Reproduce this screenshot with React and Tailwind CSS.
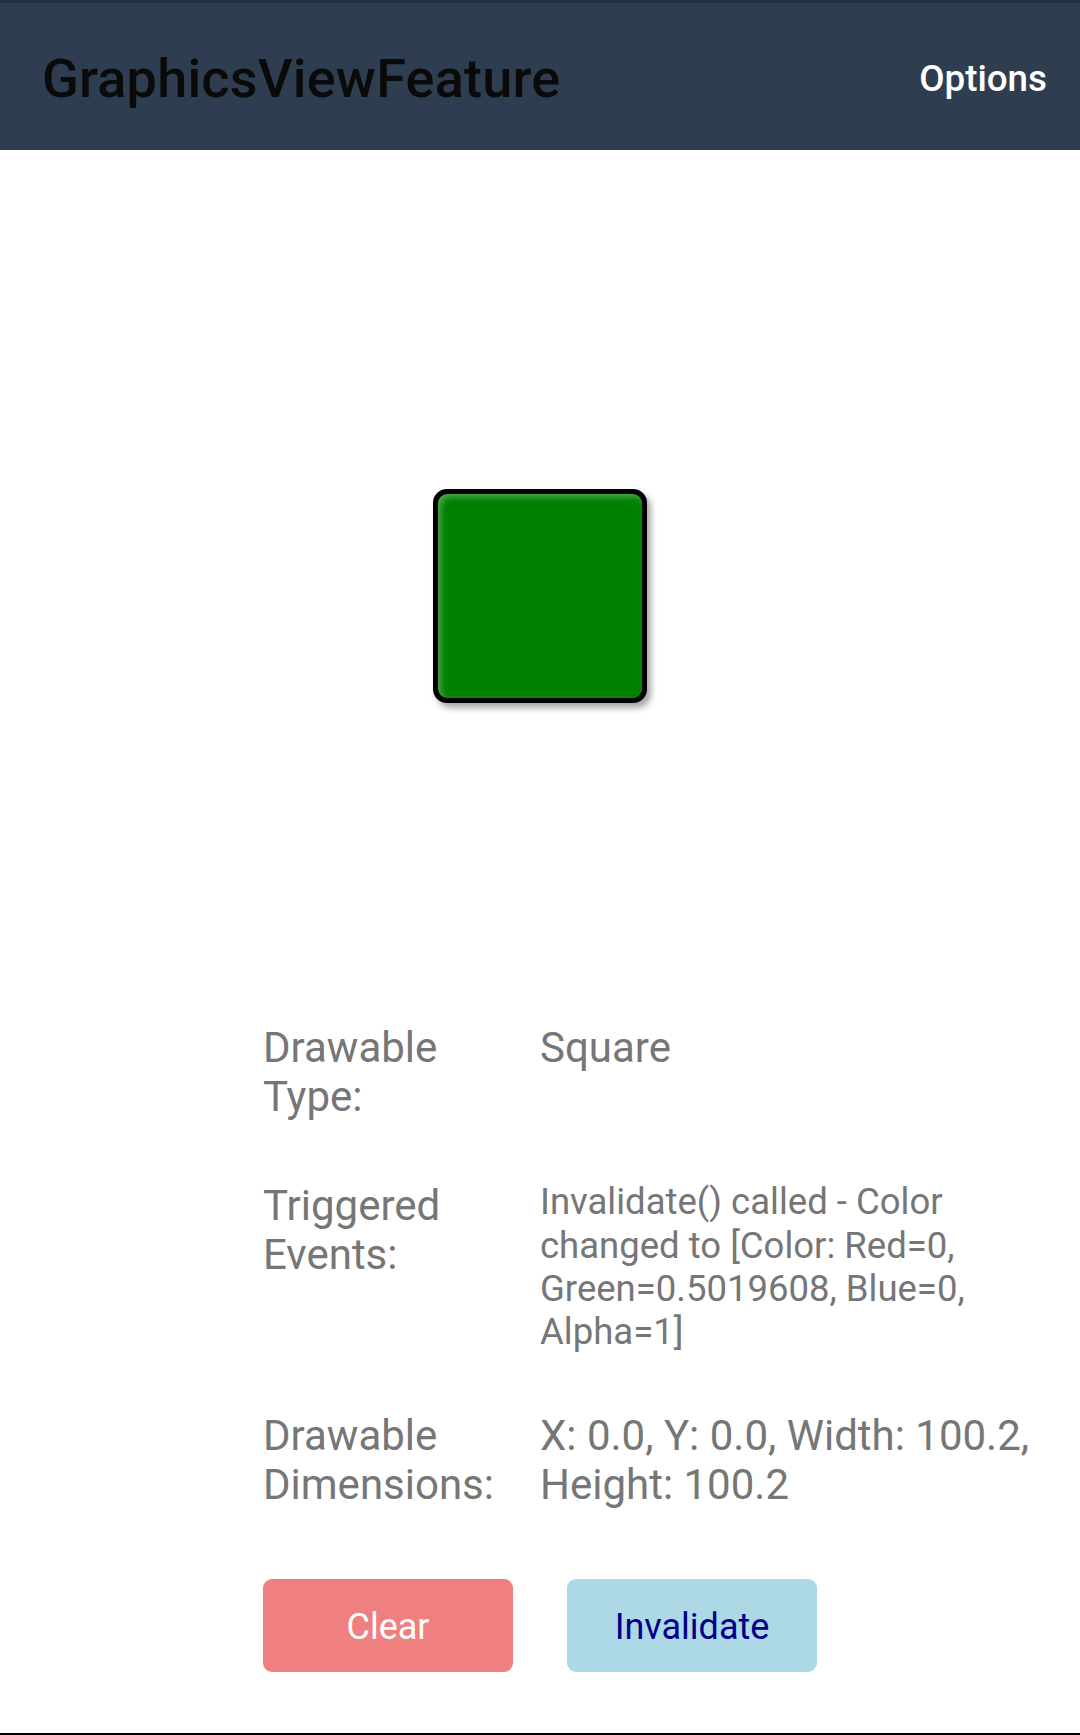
export default function App() {
  const rows = [
    { label: ['Drawable', 'Type:'], value: ['Square'], small: false, mt: 'mt-0' },
    {
      label: ['Triggered', 'Events:'],
      value: [
        'Invalidate() called - Color',
        'changed to [Color: Red=0,',
        'Green=0.5019608, Blue=0,',
        'Alpha=1]',
      ],
      small: true,
      mt: 'mt-[61px]',
    },
    {
      label: ['Drawable', 'Dimensions:'],
      value: ['X: 0.0, Y: 0.0, Width: 100.2,', 'Height: 100.2'],
      small: false,
      mt: 'mt-[59px]',
    },
  ]

  return (
    <div
      className="w-[1080px] h-[1735px] bg-white flex flex-col overflow-hidden"
      style={{ fontFamily: 'Roboto, "Noto Sans", sans-serif' }}
    >
      {/* Toolbar */}
      <header className="h-[150px] flex-shrink-0 bg-[#2e3e50] border-t-[3px] border-[#1d3148] flex items-center justify-between pl-[42px] pr-[33px] pt-[5px]">
        <h1 className="text-[54px] font-medium text-[#0a0a0a] leading-none tracking-[0.2px]">GraphicsViewFeature</h1>
        <span className="text-[36.75px] font-medium text-white leading-none">Options</span>
      </header>

      {/* Canvas */}
      <div className="h-[874px] flex-shrink-0 flex justify-center pt-[339px]">
        <div className="w-[214px] h-[214px] rounded-[14px] border-[5px] border-black bg-[#008000] shadow-[4px_5px_6px_rgba(0,0,0,0.35),inset_3px_3px_6px_rgba(255,255,255,0.3)]" />
      </div>

      {/* Info */}
      <div className="pl-[263px] flex flex-col text-[#767676]">
        {rows.map((r, i) => (
          <div key={i} className={`flex ${r.mt}`}>
            <div className="w-[277px] flex-shrink-0 text-[42px] leading-[48.7px]">
              {r.label.map(l => (
                <div key={l}>{l}</div>
              ))}
            </div>
            <div
              className={
                r.small
                  ? 'text-[36.5px] leading-[43.2px] -mt-[2px]'
                  : 'text-[42px] leading-[48.7px]'
              }
            >
              {r.value.map(v => (
                <div key={v} className="whitespace-nowrap">{v}</div>
              ))}
            </div>
          </div>
        ))}

        <div className="flex gap-[54px] mt-[69px]">
          <button className="w-[250px] h-[93px] rounded-[9px] bg-[#f08080] text-white text-[36px] pt-[4px]">Clear</button>
          <button className="w-[250px] h-[93px] rounded-[9px] bg-[#add8e6] text-[#00008b] text-[36px] pt-[4px]">Invalidate</button>
        </div>
      </div>

      <div className="flex-1" />
      <div className="h-[2px] bg-black flex-shrink-0" />
    </div>
  )
}
